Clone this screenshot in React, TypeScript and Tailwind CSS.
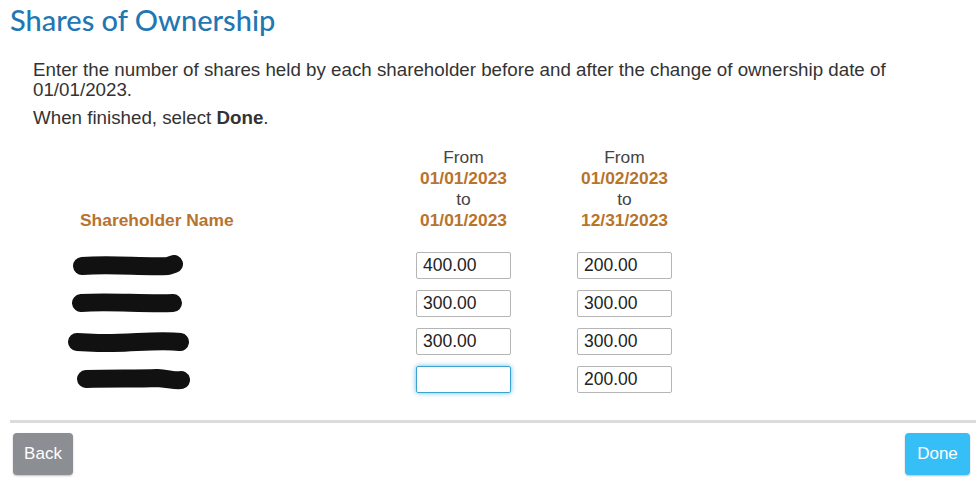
import React from 'react';

interface Row {
  blob: number;
  blobOffset: number;
  stroke: string;
  from: string;
  to: string;
}

// hand-drawn redaction strokes, one per shareholder
const rows: Row[] = [
  { blob: 112, blobOffset: 39, stroke: 'M10 11 C 40 9, 70 12, 96 11 L 102 9', from: '400.00', to: '200.00' },
  { blob: 111, blobOffset: 39, stroke: 'M9 10 C 35 8, 70 11, 101 10', from: '300.00', to: '300.00' },
  { blob: 122, blobOffset: 35, stroke: 'M9 11 L 30 12 C 60 13, 90 8, 112 11', from: '300.00', to: '300.00' },
  { blob: 114, blobOffset: 44, stroke: 'M9 10 C 35 9, 60 10, 80 9 C 92 10, 100 12, 104 11', from: '', to: '200.00' },
];

const Redacted: React.FC<{ width: number; offset: number; d: string }> = ({ width, offset, d }) => (
  <svg width={width} height={21} style={{ marginLeft: offset }} viewBox={`0 0 ${width} 21`}>
    <path d={d} fill="none" stroke="#111" strokeWidth={18} strokeLinecap="round" strokeLinejoin="round" />
  </svg>
);

const ShareInput: React.FC<{ value: string; focused?: boolean }> = ({ value, focused }) => (
  <input
    type="text"
    defaultValue={value}
    className={
      focused
        ? 'w-[95px] h-[27px] px-[6px] rounded-[2px] border border-[#3aa3d0] shadow-[0_0_5px_rgba(60,170,220,0.8)] text-[17.5px] text-[#222] outline-none'
        : 'w-[95px] h-[27px] px-[6px] rounded-[2px] border border-[#b5b5b5] text-[17.5px] text-[#222] outline-none'
    }
  />
);

const DateHeader: React.FC<{ start: string; end: string }> = ({ start, end }) => (
  <div className="w-[161px] text-center leading-[21px] text-[17.4px]">
    <div className="text-[#444]">From</div>
    <div className="font-bold text-[#b8732d]">{start}</div>
    <div className="text-[#444]">to</div>
    <div className="font-bold text-[#b8732d]">{end}</div>
  </div>
);

const App: React.FC = () => {
  return (
    <div className="w-[976px] h-[492px] bg-white overflow-hidden font-['Liberation_Sans',Arial,sans-serif] text-[#333]">
      {/* Title */}
      <h1 className="pl-[10px] h-[46px] text-[29px] leading-[40px] font-medium text-[#1f77b4] font-['Lato',sans-serif]">
        Shares of Ownership
      </h1>

      {/* Instructions */}
      <div className="pl-[33px] pr-[60px] pt-[14px] text-[18.75px] leading-[20px]">
        <p>
          Enter the number of shares held by each shareholder before and after the change of ownership date of
          01/01/2023.
        </p>
        <p className="mt-[8px]">
          When finished, select <span className="font-bold">Done</span>.
        </p>
      </div>

      {/* Table */}
      <div className="pl-[33px] pt-[19px]">
        <div className="flex items-end">
          <div className="w-[350px] pl-[47px] font-bold text-[17.4px] leading-[21px] text-[#b8732d]">
            Shareholder Name
          </div>
          <DateHeader start="01/01/2023" end="01/01/2023" />
          <DateHeader start="01/02/2023" end="12/31/2023" />
        </div>

        <div className="pt-[15px]">
          {rows.map((row, i) => (
            <div key={i} className="flex items-center h-[38px]">
              <div className="w-[350px] flex items-center">
                <Redacted width={row.blob} offset={row.blobOffset} d={row.stroke} />
              </div>
              <div className="w-[161px] flex justify-center">
                <ShareInput value={row.from} focused={row.from === ''} />
              </div>
              <div className="w-[161px] flex justify-center">
                <ShareInput value={row.to} />
              </div>
            </div>
          ))}
        </div>
      </div>

      {/* Footer */}
      <div className="ml-[10px] mt-[22px] h-[3px] bg-[#dcdcdc]" />
      <div className="flex justify-between pl-[13px] pr-[6px] pt-[10px]">
        <button className="w-[60px] h-[42px] rounded-[4px] bg-[#8b8e93] text-white text-[17px] shadow-[0_1px_2px_rgba(0,0,0,0.25)]">
          Back
        </button>
        <button className="w-[65px] h-[42px] rounded-[4px] bg-[#36bef6] text-white text-[17px] shadow-[0_1px_2px_rgba(0,0,0,0.25)]">
          Done
        </button>
      </div>
    </div>
  );
};

export default App;
